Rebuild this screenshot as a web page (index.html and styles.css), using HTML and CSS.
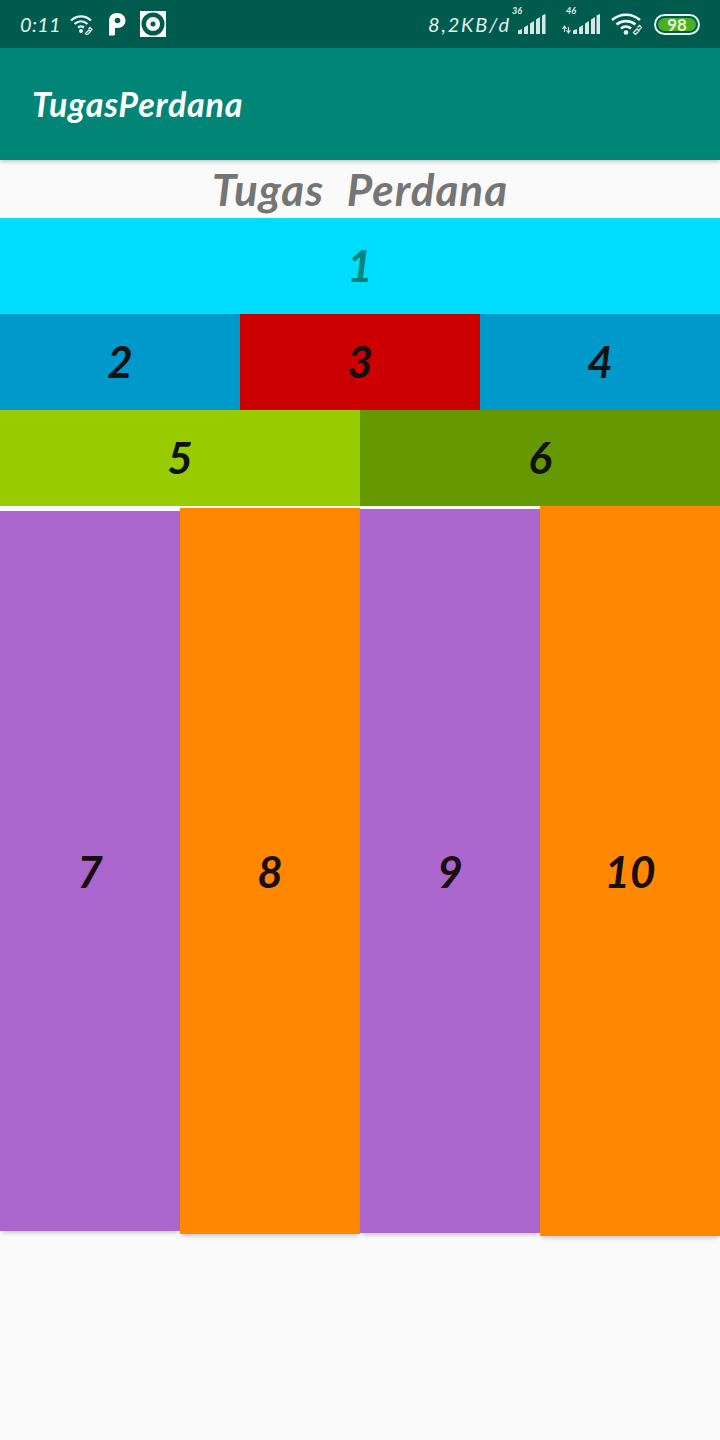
FILE: index.html
```html
<!DOCTYPE html>
<html lang="en">
<head>
    <meta charset="UTF-8">
    <meta name="viewport" content="width=device-width, initial-scale=1.0">
    <title>TugasPerdana</title>
    <link rel="stylesheet" href="styles.css">
</head>
<body>
    <!-- Status bar -->
    <div class="status_bar">
        <div class="status_left">
            <span class="clock">0:11</span>
            <svg class="wifi_small" width="24" height="22" viewBox="0 0 24 22">
                <path d="M1 7.500C7 2 15 2 21 7.500M4.500 11C8.500 7.500 13.500 7.500 17.500 11M8 14.500C10 13 12 13 14 14.500" fill="none" stroke="#e4f1ee" stroke-width="2.200"/>
                <circle cx="11" cy="18" r="2" fill="#e4f1ee"/>
                <path d="M15.500 20.500L17 22L20.500 18.500L19 17ZM19 17M18.500 16L20 14.500L22 16.500L20 18.500" fill="none" stroke="#e4f1ee" stroke-width="1.300"/>
            </svg>
            <svg class="p_icon" width="18" height="24" viewBox="0 0 18 24">
                <path d="M1 12V8.500C1 4 4.500 1 9 1C14 1 17.500 4.500 17.500 8.500C17.500 13 14 16 9.500 16H7V22C7 23 6 23.500 5 23.500H2C1 23.500 1 23 1 22Z" fill="#fff"/>
                <circle cx="9.500" cy="8.500" r="2.800" fill="#005b4f"/>
            </svg>
            <svg class="target_icon" width="26" height="26" viewBox="0 0 26 26">
                <rect width="26" height="26" fill="#fff"/>
                <circle cx="13" cy="13" r="11.500" fill="#005b4f"/>
                <circle cx="13" cy="13" r="7" fill="#fff"/>
                <circle cx="13" cy="13" r="2.500" fill="#005b4f"/>
            </svg>
        </div>
        <div class="status_right">
            <span class="speed">8,2KB/d</span>
            <div class="signal signal_3g">
                <span class="net_label">36</span>
                <svg width="29" height="20" viewBox="0 0 29 20">
                    <path d="M1 16.500L5 15V20H1ZM7 13.500L11 11V20H7ZM13 9.500L17 7V20H13ZM19 5.500L23 3V20H19ZM25 1.500L28.500 0V20H25Z" fill="#d6e8e4"/>
                </svg>
            </div>
            <div class="signal signal_4g">
                <span class="net_label">46</span>
                <svg width="38" height="20" viewBox="0 0 38 20">
                    <path d="M2.500 12v6M0.500 15l2 -3l2 3M6.500 19v-6M4.500 16l2 3l2 -3" fill="none" stroke="#d6e8e4" stroke-width="1.100"/>
                    <path d="M11 16.500L15 15V20H11ZM17 13.500L21 11V20H17ZM23 9.500L27 7V20H23ZM29 5.500L33 3V20H29ZM34.500 1.500L38 0V20H34.500Z" fill="#d6e8e4"/>
                </svg>
            </div>
            <svg class="wifi_big" width="32" height="22" viewBox="0 0 32 22">
                <path d="M1 7C9 0 21 0 29 7M5.500 11.500C11 7 19 7 24.500 11.500M10 15.500C13 13 17 13 20 15.500" fill="none" stroke="#f2f8f6" stroke-width="2.600"/>
                <circle cx="15" cy="19.500" r="2.300" fill="#f2f8f6"/>
                <path d="M22.500 19.500L24.500 21.500L28 18L26 16ZM26.500 14.500L28.500 12.500L30.500 14.500L28 17" fill="none" stroke="#e4f1ee" stroke-width="1.300"/>
            </svg>
            <div class="battery">
                <div class="battery_fill">98</div>
            </div>
        </div>
    </div>

    <!-- Action bar -->
    <div class="app_bar">
        <span class="app_title">TugasPerdana</span>
    </div>

    <h1 class="page_title">Tugas Perdana</h1>

    <div class="row">
        <div class="box cyan num_one">1</div>
    </div>
    <div class="row">
        <div class="box blue">2</div>
        <div class="box red">3</div>
        <div class="box blue">4</div>
    </div>
    <div class="row">
        <div class="box lime">5</div>
        <div class="box green">6</div>
    </div>

    <!-- Four tall columns, each one a little different in height -->
    <div class="tall_row">
        <div class="tall purple col_7">7</div>
        <div class="tall orange col_8">8</div>
        <div class="tall purple col_9">9</div>
        <div class="tall orange col_10">10</div>
    </div>
</body>
</html>
```

FILE: styles.css
```css
/* Global styling */
body {
    margin: 0;
    width: 720px;
    height: 1440px;
    overflow: hidden;
    background-color: #fafafa;
    font-family: "Lato", "Noto Sans", sans-serif;
    font-style: italic;
}

/* Status bar */
.status_bar {
    height: 48px;
    background-color: #005b4f;
    display: flex;
    justify-content: space-between;
    align-items: center;
    padding: 0 20px;
    box-sizing: border-box;
    color: #e4f1ee;
}
.status_left {
    display: flex;
    align-items: center;
}
.status_right {
    display: flex;
    align-items: center;
}
.clock {
    width: 50px;
    font-size: 20px;
    letter-spacing: 0.300px;
}
.p_icon {
    margin-left: 14px;
}
.target_icon {
    margin-left: 14px;
}
.speed {
    font-size: 20px;
    letter-spacing: 1.800px;
    width: 89px;
    white-space: nowrap;
}
.signal {
    position: relative;
    display: flex;
    margin-top: 0;
}
.signal_4g {
    margin-left: 16px;
}
.net_label {
    position: absolute;
    top: -9px;
    font-size: 9px;
    font-weight: bold;
    left: -5px;
}
.signal_4g .net_label {
    left: 4px;
}
.wifi_big {
    margin-left: 11px;
}
.battery {
    width: 46px;
    height: 21px;
    margin-left: 11px;
    border: 2px solid #e4f1ee;
    border-radius: 11px;
    box-sizing: border-box;
    padding: 2px;
}
.battery_fill {
    width: 38px;
    height: 13px;
    background-color: #4caf20;
    border-radius: 7px;
    font-size: 17px;
    line-height: 13px;
    font-style: normal;
    font-weight: bold;
    text-align: center;
    color: #e6f5d8;
}

/* Action bar */
.app_bar {
    height: 112px;
    background-color: #008577;
    box-shadow: 0 2px 4px rgba(0, 0, 0, 0.2);
    display: flex;
    align-items: center;
    padding-left: 32px;
    padding-bottom: 2px;
    box-sizing: border-box;
    position: relative;
}
.app_title {
    color: #fff;
    font-size: 34px;
    font-weight: bold;
    letter-spacing: 0.800px;
}

.page_title {
    margin: 0;
    height: 58px;
    line-height: 58px;
    text-align: center;
    font-size: 44px;
    font-weight: bold;
    letter-spacing: 1px;
    word-spacing: 12px;
    color: #757575;
}

/* Rows of coloured boxes */
.row {
    display: flex;
    height: 96px;
}
.box {
    flex: 1;
    display: flex;
    align-items: center;
    justify-content: center;
    font-size: 44px;
    font-weight: bold;
    color: #111;
    padding-bottom: 2px;
    box-sizing: border-box;
}
.cyan {
    background-color: #00ddff;
}
.num_one {
    color: #008577;
}
.blue {
    background-color: #0099cc;
}
.red {
    background-color: #cc0000;
}
.lime {
    background-color: #99cc00;
}
.green {
    background-color: #669900;
}

/* Tall columns */
.tall_row {
    display: flex;
    align-items: flex-start;
}
.tall {
    flex: 1;
    display: flex;
    align-items: center;
    justify-content: center;
    font-size: 44px;
    font-weight: bold;
    color: #1a0d10;
    box-shadow: 0 4px 4px -2px rgba(0, 0, 0, 0.2);
}
.purple {
    background-color: #aa66cc;
}
.orange {
    background-color: #ff8800;
}
.col_7 {
    height: 720px;
    margin-top: 5px;
}
.col_8 {
    height: 726px;
    margin-top: 2px;
}
.col_9 {
    height: 724px;
    margin-top: 3px;
}
.col_10 {
    height: 730px;
}
```
